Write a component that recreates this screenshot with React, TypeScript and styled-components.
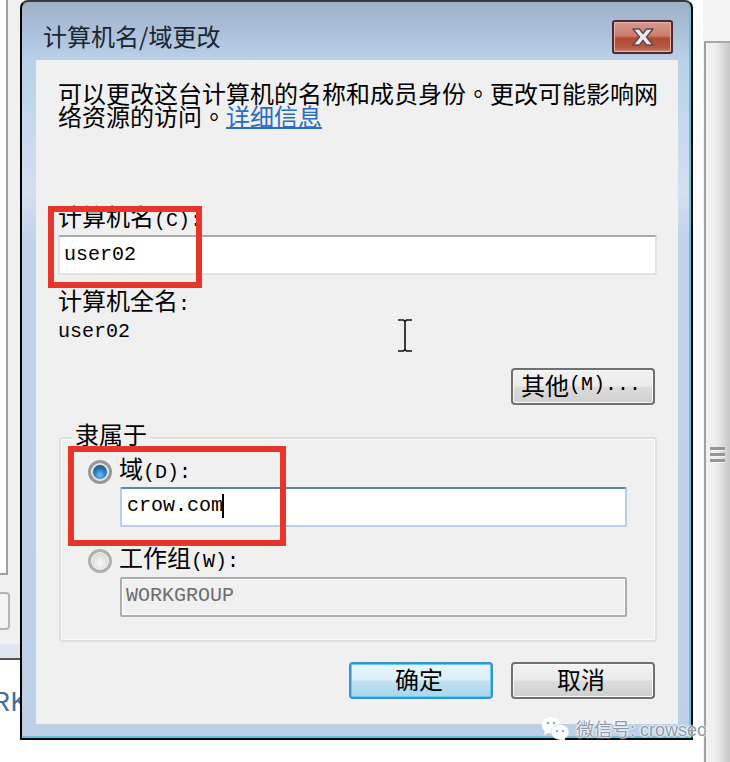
import * as React from 'react';
import styled, { createGlobalStyle } from 'styled-components';

const cjk = '"Noto Sans CJK SC", "Liberation Sans", sans-serif';
const mono = '"Liberation Mono", "Noto Sans CJK SC", monospace';

const GlobalStyle = createGlobalStyle`
	html, body {
		margin: 0;
		padding: 0;
		background: #fff;
	}
	* {
		box-sizing: border-box;
	}
`;

const Page = styled.div`
	position: relative;
	display: grid;
	grid-template-columns: 20px 673px 37px;
	width: 730px;
	height: 762px;
	overflow: hidden;
	background: #fff;
	font-family: ${cjk};
	font-size: 24px;
	line-height: 23px;
	color: #000;
`;

const LeftPane = styled.div`
	display: flex;
	flex-direction: column;
	height: 762px;
	overflow: hidden;
`;

const BehindPanel = styled.div`
	height: 644px;
	background: #f0f0f0;
`;

const BehindList = styled.div`
	width: 8px;
	height: 575px;
	background: #fff;
	border-right: 2px solid #a0a0a0;
	border-bottom: 2px solid #a0a0a0;
`;

const BehindButton = styled.div`
	width: 10px;
	height: 38px;
	margin-top: 17px;
	background: #f4f4f4;
	border: 2px solid #b4b4b4;
	border-left: 0;
	border-radius: 0 4px 4px 0;
`;

const BehindBand = styled.div`
	height: 16px;
	background: #dfe6f0;
	border-bottom: 2px solid #555;
`;

const BehindText = styled.div`
	margin: 29px 0 0 -9px;
	font-family: "Liberation Sans", sans-serif;
	font-size: 27px;
	line-height: 27px;
	white-space: nowrap;
	color: #3f6f9f;
`;

const Window = styled.div`
	height: 739.5px;
	border: 2px solid #000;
	border-top-color: #3a3a3a;
	border-radius: 8px 8px 0 0;
	padding: 2px 0 0;
	background: linear-gradient(180deg, #9db2ca 0, #bad0e8 58px, #d2e0f0 190px, #c0d3ea 240px, #bdd0e8 100%);
	box-shadow: inset -2px -2px 0 #63c3dd;
`;

const TitleBar = styled.div`
	display: flex;
	align-items: flex-start;
	justify-content: space-between;
	height: 56px;
	padding: 16px 18px 0 21px;
`;

const Title = styled.div`
	font-size: 24px;
	line-height: 30px;
	color: #1c2530;
	margin-top: 1px;
`;

const CloseButton = styled.div`
	display: flex;
	align-items: center;
	justify-content: center;
	width: 61px;
	height: 34px;
	border: 2px solid #4a2a34;
	border-radius: 3px;
	box-shadow: inset 0 0 0 1px #e6b4aa;
	background: linear-gradient(180deg, #d99a8e 0, #cb7d6e 46%, #b24a30 54%, #b65a44 85%, #d08a78 100%);
`;

const Body = styled.div`
	display: flex;
	flex-direction: column;
	height: 664px;
	margin: 0 13px 0 14px;
	padding: 23px 21px 0 22px;
	background: #f0f0f0;
`;

const Intro = styled.div`
	height: 48px;
	margin-top: -2px;
	white-space: nowrap;
`;

// the reference draws the full stop in the middle of its cell
const Stop = styled.span`
	font-family: "Noto Sans CJK TC", sans-serif;
`;

const Link = styled.span`
	color: #2a6cc0;
	text-decoration: underline;
	text-underline-offset: 1px;
`;

const Label = styled.div<{ $top?: number }>`
	height: 23px;
	margin-top: ${props => props.$top || 0}px;
	line-height: 19px;
	white-space: nowrap;
`;

const Latin = styled.span`
	font-family: ${mono};
	font-size: 20px;
`;

const Value = styled(Label)`
	font-family: ${mono};
	font-size: 20px;
	line-height: 23px;
`;

const TextField = styled.div<{ $top?: number; $state?: 'normal' | 'focus' | 'disabled' }>`
	display: flex;
	align-items: center;
	height: 40px;
	margin-top: ${props => props.$top || 0}px;
	padding: 0 0 ${props => (props.$state === 'normal' ? 2 : 4)}px ${props => (props.$state === 'focus' ? 5 : 4)}px;
	border: 2px solid;
	border-radius: 2px;
	font-family: ${mono};
	font-size: 20px;
	white-space: nowrap;
	${props =>
		props.$state === 'focus'
			? `
		background: #fff;
		border-color: #5a85b0 #b5cfe8 #b5cfe8 #b5cfe8;
	`
			: props.$state === 'disabled'
			? `
		background: #f0f0f0;
		border-color: #adadad;
		box-shadow: inset 0 0 0 1px #fff;
		color: #6d6d6d;
	`
			: `
		background: #fff;
		border-color: #ababab #e3e3e3 #e3e3e3 #e3e3e3;
	`};
`;

const Caret = styled.span`
	display: inline-block;
	flex: none;
	width: 2px;
	height: 24px;
	margin: 0 0 -2px -1px;
	background: #000;
`;

const ButtonRow = styled.div<{ $top: number }>`
	display: flex;
	justify-content: flex-end;
	gap: 18px;
	margin: ${props => props.$top}px 2px 0 0;
`;

const Button = styled.div<{ $primary?: boolean }>`
	display: flex;
	align-items: center;
	justify-content: center;
	width: 144px;
	height: 37px;
	padding: 0 4px 4px 0;
	border: 2px solid ${props => (props.$primary ? '#3f8fc8' : '#707070')};
	border-radius: 4px;
	white-space: nowrap;
	box-shadow: inset 0 0 0 1px ${props => (props.$primary ? '#5fd0f5' : '#fafafa')};
	background: ${props =>
		props.$primary
			? 'linear-gradient(180deg, #eaf6fc 0, #dcEff8 48%, #c2e2f2 52%, #a8d6ee 100%)'
			: 'linear-gradient(180deg, #f3f3f3 0, #ebebeb 48%, #dcdcdc 52%, #cfcfcf 100%)'};
`;

const Group = styled.div`
	height: 205px;
	margin: 32px 0 0 1px;
	padding: 0 28px 0 27px;
	border: 2px solid #dce2e2;
	border-radius: 3px;
	box-shadow: inset 0 0 0 1px #fbfbfb;
`;

const GroupLegend = styled.div`
	width: fit-content;
	height: 23px;
	margin: -15px 0 0 -16px;
	padding: 0 3px;
	line-height: 19px;
	background: #f0f0f0;
`;

const RadioRow = styled.div<{ $top: number }>`
	display: flex;
	align-items: center;
	gap: 7px;
	height: 23px;
	margin-top: ${props => props.$top}px;
	white-space: nowrap;
`;

const RadioLabel = styled.span`
	margin-bottom: 4px;
`;

const Radio = styled.span<{ $checked?: boolean }>`
	display: flex;
	align-items: center;
	justify-content: center;
	flex: none;
	width: 24px;
	height: 24px;
	border-radius: 50%;
	border: 3px solid ${props => (props.$checked ? '#989898' : '#b0b0b0')};
	box-shadow: inset 0 0 0 1px #f8f8f8;
	background: ${props =>
		props.$checked ? '#d8d8d8' : 'radial-gradient(circle at 50% 60%, #fafafa 0, #d4d4d4 75%)'};
`;

const RadioDot = styled.span`
	width: 14px;
	height: 14px;
	border-radius: 50%;
	background: radial-gradient(circle at 50% 72%, #6cc0f0 0, #2a78b8 50%, #123f70 100%);
`;

const IndentedField = styled(TextField)`
	margin-left: 32px;
`;

const RightPane = styled.div`
	height: 762px;
	padding: 41px 0 0 10.5px;
	background: linear-gradient(90deg, #fff 10.5px, #f4f4f4 10.5px);
`;

const Scrollbar = styled.div`
	display: flex;
	align-items: flex-start;
	justify-content: center;
	height: 721px;
	padding: 404px 0 0 0;
	border-top: 2px solid #a8a8a8;
	border-left: 2px solid #a0a0a0;
	background: linear-gradient(90deg, #f2f2f2 0, #ececec 45%, #d4d4d4 80%, #c8c8c8 100%);
`;

const Gripper = styled.div`
	display: flex;
	flex-direction: column;
	gap: 3px;
	width: 15px;
	height: 18px;
`;

const GripLine = styled.span`
	height: 3px;
	background: #969696;
	box-shadow: 0 1px 0 #f4f4f4;
`;

const Callout = styled.div<{ $left: number; $top: number; $width: number; $height: number }>`
	position: absolute;
	left: ${props => props.$left}px;
	top: ${props => props.$top}px;
	width: ${props => props.$width}px;
	height: ${props => props.$height}px;
	border: 6px solid #e8352a;
`;

const Cursor = styled.svg`
	position: absolute;
	left: 398px;
	top: 319px;
`;

const Watermark = styled.div`
	position: absolute;
	left: 541px;
	top: 716px;
	display: flex;
	align-items: center;
	gap: 6px;
	font-size: 18px;
	line-height: 24px;
	color: #8e9aa8;
	text-shadow: 0 0 2px #fff, 0 0 2px #fff, 0 0 3px #fff;
	white-space: nowrap;
`;

const WatermarkLatin = styled.span`
	font-family: "Liberation Sans", sans-serif;
`;

const WeChatIcon = () => (
	<svg width="29" height="26" viewBox="0 0 29 26">
		<ellipse cx="10" cy="9" rx="9.5" ry="8" fill="#fff" />
		<path d="M4 14 L3 19 L9 16 Z" fill="#fff" />
		<circle cx="7" cy="7" r="1.3" fill="#9aa6b4" />
		<circle cx="13" cy="7" r="1.3" fill="#9aa6b4" />
		<ellipse cx="19" cy="16" rx="9" ry="7.5" fill="#fff" stroke="#c8d2de" strokeWidth="0.6" />
		<path d="M23 21 L25 25.5 L18 23 Z" fill="#fff" />
		<circle cx="16" cy="15" r="1.2" fill="#9aa6b4" />
		<circle cx="22" cy="15" r="1.2" fill="#9aa6b4" />
	</svg>
);

const CloseGlyph = () => (
	<svg width="24" height="20" viewBox="0 0 24 20">
		<path
			d="M2 2 H8.5 L12 6.5 L15.5 2 H22 L15.5 10 L22 18 H15.5 L12 13.5 L8.5 18 H2 L8.5 10 Z"
			fill="#ececf0"
			stroke="#5a4a55"
			strokeWidth="1.5"
			strokeLinejoin="round"
		/>
	</svg>
);

const App = () => (
	<Page>
		<GlobalStyle />
		<LeftPane>
			<BehindPanel>
				<BehindList />
				<BehindButton />
			</BehindPanel>
			<BehindBand />
			<BehindText>RK</BehindText>
		</LeftPane>
		<Window>
			<TitleBar>
				<Title>计算机名/域更改</Title>
				<CloseButton>
					<CloseGlyph />
				</CloseButton>
			</TitleBar>
			<Body>
				<Intro>
					可以更改这台计算机的名称和成员身份<Stop>。</Stop>更改可能影响网
					<br />
					络资源的访问<Stop>。</Stop>
					<Link>详细信息</Link>
				</Intro>
				<Label $top={77}>
					计算机名<Latin>(C):</Latin>
				</Label>
				<TextField $top={6} $state="normal">user02</TextField>
				<Label $top={15}>
					计算机全名<Latin>:</Latin>
				</Label>
				<Value $top={7}>user02</Value>
				<ButtonRow $top={25}>
					<Button>
						其他<Latin>(M)...</Latin>
					</Button>
				</ButtonRow>
				<Group>
					<GroupLegend>隶属于</GroupLegend>
					<RadioRow $top={13}>
						<Radio $checked>
							<RadioDot />
						</Radio>
						<RadioLabel>
							域<Latin>(D):</Latin>
						</RadioLabel>
					</RadioRow>
					<IndentedField $top={4} $state="focus">
						crow.com
						<Caret />
					</IndentedField>
					<RadioRow $top={22}>
						<Radio />
						<RadioLabel>
							工作组<Latin>(W):</Latin>
						</RadioLabel>
					</RadioRow>
					<IndentedField $top={5} $state="disabled">WORKGROUP</IndentedField>
				</Group>
				<ButtonRow $top={20}>
					<Button $primary>确定</Button>
					<Button>取消</Button>
				</ButtonRow>
			</Body>
		</Window>
		<RightPane>
			<Scrollbar>
				<Gripper>
					<GripLine />
					<GripLine />
					<GripLine />
				</Gripper>
			</Scrollbar>
		</RightPane>
		<Callout $left={48} $top={206} $width={154} $height={82} />
		<Callout $left={68} $top={446} $width={218} $height={100} />
		<Cursor width="14" height="33" viewBox="0 0 14 33">
			<path d="M0 1 H5.5 L7 2.5 L8.5 1 H14 M7 2.5 V30.5 M0 32 H5.5 L7 30.5 L8.5 32 H14" fill="none" stroke="#111" strokeWidth="1.6" />
		</Cursor>
		<Watermark>
			<WeChatIcon />
			<span>
				微信号<WatermarkLatin>: crowsec</WatermarkLatin>
			</span>
		</Watermark>
	</Page>
);

export default App;
